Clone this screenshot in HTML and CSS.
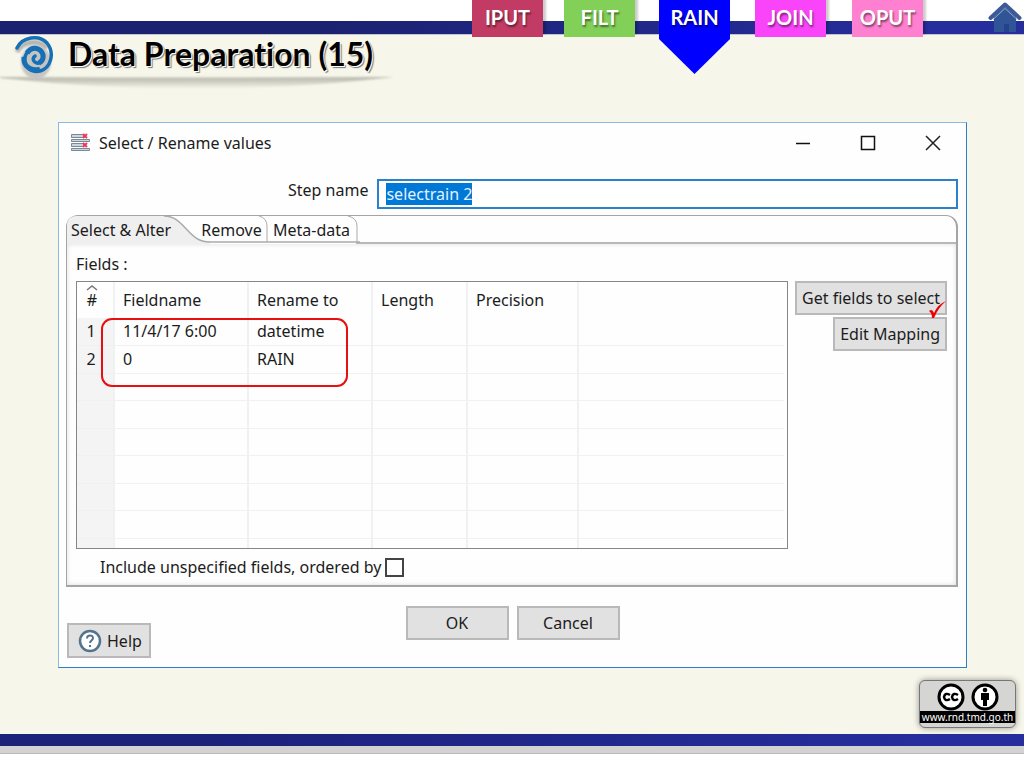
FILE: index.html
```html
<!DOCTYPE html>
<html lang="en">
<head>
<meta charset="utf-8">
<title>Data Preparation (15)</title>
<link rel="stylesheet" href="styles.css">
</head>
<body>
<header class="topbar">
  <nav class="steps">
    <a class="step step-iput" href="#iput">IPUT</a>
    <a class="step step-filt" href="#filt">FILT</a>
    <a class="step step-rain" href="#rain">RAIN</a>
    <a class="step step-join" href="#join">JOIN</a>
    <a class="step step-oput" href="#oput">OPUT</a>
  </nav>
  <a class="home" href="#home" aria-label="Home">
    <svg width="34" height="32" viewBox="0 0 34 32">
      <path d="M6 17 17 7l11 10v15h-7v-8h-5v8H6z" fill="#2f5597"/>
      <path d="M16 24h5v8h-5z" fill="#26428f"/>
      <path d="M2.500 18 17 4.500 31.500 18" fill="none" stroke="#3b5a96" stroke-width="4" stroke-linecap="round" stroke-linejoin="round"/>
      <path d="M5 19.500 17 8.500 29 19.500" fill="none" stroke="#8ea6cc" stroke-width="1"/>
    </svg>
  </a>
</header>

<main class="slide">
  <div class="heading">
    <svg class="swirl" width="48" height="48" viewBox="0 0 48 48" aria-hidden="true">
      <defs><filter id="soft" x="-20%" y="-20%" width="140%" height="140%"><feGaussianBlur stdDeviation="1"/></filter></defs>
      <ellipse cx="24" cy="27" rx="15" ry="17" fill="#c4c4c1" filter="url(#soft)"/>
      <path d="M5 17C10 6 27 4 35 13" fill="none" stroke="#b4b4b2" stroke-width="5" filter="url(#soft)"/>
      <g fill="none" stroke="#176fb5">
        <path d="M5 13C10 2 27-1 35 8c8 10 4 25-7 28-9 2-17-5-15-14 2-8 11-11 16-6 5 6 1 13-4 12-4-1-5-5-2-7" stroke-width="3.500" stroke-linecap="round"/>
        <path d="M12 22c-1 9 7 15 16 12M15 18c4-6 10-6 14-2 4 5 2 10-2 12" stroke-width="5"/>
      </g>
    </svg>
    <h1>Data Preparation (15)</h1>
    <svg class="heading-shade" viewBox="0 0 394 16" preserveAspectRatio="none" aria-hidden="true">
      <defs><linearGradient id="shade" x1="0" y1="0" x2="0" y2="1"><stop offset="0" stop-color="#b4b4aa"/><stop offset="1" stop-color="#f6f6ea"/></linearGradient></defs>
      <path d="M0 3Q200 4 394 3Q200 26 0 4z" fill="url(#shade)" filter="url(#soft)"/>
    </svg>
  </div>

  <section class="dialog" aria-label="Select / Rename values">
    <div class="titlebar">
      <svg width="22" height="20" viewBox="0 0 22 20" aria-hidden="true">
        <g fill="#c8d6e2" stroke="#7b8995">
          <path d="M1.500 1.500h12v3h-12zM1.500 6.500h18v2h-18zM1.500 10.500h12v3h-12zM1.500 15.500h18v2h-18z"/>
        </g>
        <path d="m13 1 4 4m0-4-4 4M13 10l4 4m0-4-4 4" stroke="#f0385c" stroke-width="2"/>
      </svg>
      <h2>Select / Rename values</h2>
      <div class="window-buttons">
        <button type="button" aria-label="Minimize"><svg width="16" height="16" viewBox="0 0 16 16"><path d="M1 8.500h14" stroke="#111" stroke-width="1.500"/></svg></button>
        <button type="button" aria-label="Maximize"><svg width="16" height="16" viewBox="0 0 16 16"><path d="M1.500 1.500h13v13h-13z" fill="none" stroke="#111" stroke-width="1.500"/></svg></button>
        <button type="button" aria-label="Close"><svg width="16" height="16" viewBox="0 0 16 16"><path d="m1 1 14 14M15 1 1 15" stroke="#222" stroke-width="1.500"/></svg></button>
      </div>
    </div>

    <div class="step-name">
      <label for="stepname">Step name</label>
      <input id="stepname" type="text" value="selectrain 2" autofocus>
    </div>

    <div class="tabs">
      <div class="tablist" role="tablist">
        <svg class="tab-shape" width="294" height="29" viewBox="0 0 294 29" aria-hidden="true">
          <path d="M1 29V11Q1 1 11 1H98C119 1 121 27 144 27V29z" fill="#efefef"/>
          <path d="M98 1C119 1 121 27 144 27H294" fill="none" stroke="#aaa" stroke-width="1.500"/>
          <path d="M193 1q8 2 8 10v16M282 1q9 2 9 10v16" fill="none" stroke="#aaa"/>
        </svg>
        <button class="tab tab-alter" type="button" role="tab" aria-selected="true">Select &amp; Alter</button>
        <button class="tab tab-remove" type="button" role="tab" aria-selected="false">Remove</button>
        <button class="tab" type="button" role="tab" aria-selected="false">Meta-data</button>
        <span class="tab-rest"></span>
      </div>

      <div class="panel" role="tabpanel">
        <div class="fields-label">Fields :</div>
        <div class="fields">
          <div class="grid-box">
            <table class="grid">
              <colgroup><col class="c-num"><col class="c-field"><col class="c-rename"><col class="c-length"><col class="c-precision"><col></colgroup>
              <thead><tr><th class="num"><svg width="12" height="6" viewBox="0 0 12 6" aria-hidden="true"><path d="m1 5 5-4 5 4" fill="none" stroke="#777" stroke-width="1.500"/></svg>#</th><th>Fieldname</th><th>Rename to</th><th>Length</th><th>Precision</th><th></th></tr></thead>
              <tbody>
                <tr><td class="num">1</td><td>11/4/17 6:00</td><td>datetime</td><td></td><td></td><td></td></tr>
                <tr><td class="num">2</td><td>0</td><td>RAIN</td><td></td><td></td><td></td></tr>
                <tr><td class="num"></td><td></td><td></td><td></td><td></td><td></td></tr>
                <tr><td class="num"></td><td></td><td></td><td></td><td></td><td></td></tr>
                <tr><td class="num"></td><td></td><td></td><td></td><td></td><td></td></tr>
                <tr><td class="num"></td><td></td><td></td><td></td><td></td><td></td></tr>
                <tr><td class="num"></td><td></td><td></td><td></td><td></td><td></td></tr>
                <tr><td class="num"></td><td></td><td></td><td></td><td></td><td></td></tr>
                <tr class="last"><td class="num"></td><td></td><td></td><td></td><td></td><td></td></tr>
              </tbody>
            </table>
            <span class="mark-box"></span>
          </div>
          <div class="side">
            <button class="btn" type="button">Get fields to select</button>
            <button class="btn" type="button">Edit Mapping</button>
            <svg class="check" width="20" height="20" viewBox="0 0 20 20" aria-hidden="true"><path d="M2 11q3-3 5 2Q11 4 19 1 11 8 7 18H5Q5 13 2 11z" fill="#f00000"/></svg>
          </div>
        </div>
        <div class="include">
          <label for="unspecified">Include unspecified fields, ordered by</label>
          <input id="unspecified" type="checkbox">
        </div>
      </div>
    </div>

    <div class="actions">
      <button class="btn help" type="button">
        <svg width="24" height="24" viewBox="0 0 24 24" aria-hidden="true"><circle cx="12" cy="12" r="10" fill="#fff" stroke="#54738c" stroke-width="2.500"/><path d="M9 9.500c0-4 6-4 6-.5 0 2.500-3 2.500-3 5M12 16v2" fill="none" stroke="#54738c" stroke-width="2"/></svg>
        Help
      </button>
      <div class="confirm">
        <button class="btn" type="button">OK</button>
        <button class="btn" type="button">Cancel</button>
      </div>
    </div>
  </section>
</main>

<footer class="footer">
  <a class="license" href="#license">
    <svg width="62" height="28" viewBox="0 0 62 28" aria-hidden="true">
      <g fill="#fff" stroke="#000" stroke-width="3"><circle cx="14" cy="14" r="12"/><circle cx="48" cy="14" r="12"/></g>
      <path d="M13 12q-5-3-6 2 1 5 6 2M21 12q-5-3-6 2 1 5 6 2" fill="none" stroke="#000" stroke-width="2.500"/>
      <circle cx="48" cy="7" r="2.300"/><path d="M44 10h8v7h-2v6h-4v-6h-2z"/>
    </svg>
    <span>www.rnd.tmd.go.th</span>
  </a>
</footer>
<script src="script.js"></script>
</body>
</html>
```

FILE: styles.css
```css
* { box-sizing: border-box; }

body {
  margin: 0;
  min-height: 100vh;
  display: flex;
  flex-direction: column;
  background: #f6f6ea;
  color: #1c1c1c;
  font: 16px/22px "Noto Sans", "Open Sans", sans-serif;
}

button, input { font: inherit; color: inherit; }
h1, h2 { margin: 0; }

.topbar {
  display: flex;
  justify-content: flex-end;
  height: 35px;
  background: linear-gradient(#fff 21px, transparent 21px 34px, #c4c4d0 34px), linear-gradient(90deg, #1b2270 30%, #262d9c 90%);
}

.steps {
  display: grid;
  grid-template-columns: 92px 95px 96px 97px 71px;
  align-items: start;
  margin-right: 65px;
}

.step {
  width: 71px;
  height: 37px;
  color: #fff;
  font: bold 20px/35px Lato, sans-serif;
  text-align: center;
  text-decoration: none;
  text-shadow: 1px 2px 2px rgba(0, 0, 0, 0.5);
  box-shadow: 3px -3px 2px rgba(0, 0, 0, 0.2);
}

.step-iput { background: #c23b64; }
.step-filt { background: #82d058; }
.step-join { background: #f944f9; }
.step-oput { background: #ff80d0; }
.step-rain {
  height: 74px;
  background: #00f;
  clip-path: polygon(0 0, 100% 0, 100% 39px, 50% 100%, 0 39px);
}

.home { width: 36px; height: 34px; }

.slide {
  flex: 1;
  padding: 0 57px 66px 58px;
}

.heading {
  position: relative;
  display: flex;
  gap: 8px;
  height: 87px;
  margin-left: -46px;
}

.heading h1 {
  color: #000;
  font: bold 32px/38px Lato, sans-serif;
  font-variant-ligatures: none;
  text-shadow: 1px 1px 0 #fff, 2px 2px 1px #777;
}

.heading-shade {
  position: absolute;
  top: 39px;
  left: -12px;
  width: 394px;
  height: 16px;
  z-index: -1;
}

.dialog {
  display: flex;
  flex-direction: column;
  padding: 0 8px 9px 7px;
  background: #fefefe;
  border: 1px solid #2b7fc9;
  border-top-color: #8abbe0;
  border-left-color: #8abbe0;
}

.titlebar {
  display: flex;
  align-items: center;
  gap: 7px;
  height: 40px;
  padding: 0 11px 0 4px;
}

.titlebar h2 { flex: 1; font-size: 16px; font-weight: normal; }
.window-buttons { display: flex; gap: 49px; padding-right: 6px; }
.window-buttons button {
  display: flex;
  padding: 0;
  border: 0;
  background: none;
}

.step-name {
  display: flex;
  gap: 9px;
  height: 30px;
  margin: 16px 0 6px;
  padding-left: 222px;
}

.step-name label { white-space: nowrap; }
.step-name input {
  flex: 1;
  min-width: 0;
  padding: 0 7px;
  border: 2px solid #2b82cb;
  background: #fff;
  outline: 0;
  caret-color: #e89048;
}
.step-name input::selection { background: #0078d7; color: #e4f2ff; }

.tabs {
  border: 1px solid #a5a5a5;
  border-right-width: 2px;
  border-bottom-width: 2px;
  border-radius: 12px 12px 0 0;
}

.tablist {
  position: relative;
  display: flex;
  height: 28px;
}

.tab-shape { position: absolute; left: -1px; top: -1px; }
.tab {
  position: relative;
  padding: 0 6px 0 4px;
  border: 0;
  background: none;
}
.tab-alter { width: 129px; text-align: left; white-space: nowrap; }
.tab-remove { width: 73px; }
.tab-rest { flex: 1; border-bottom: 2px solid #b8b8b8; }

.panel {
  padding: 9px 9px 7px;
  box-shadow: inset 0 0 5px #ddd;
}

.fields-label { height: 28px; }
.fields { display: flex; gap: 7px; }

.grid-box {
  position: relative;
  flex: 1;
  border: 1px solid #85858a;
  padding-right: 3px;
}

.grid {
  width: 100%;
  border-collapse: collapse;
  table-layout: fixed;
}
.c-num { width: 37px; }
.c-field { width: 134px; }
.c-rename { width: 124px; }
.c-length { width: 95px; }
.c-precision { width: 111px; }

.grid th, .grid td {
  height: 27px;
  padding: 0 8px;
  border-right: 2px solid #f0f1f3;
  border-bottom: 1px solid #f0f1f3;
  font-weight: normal;
  line-height: 20px;
  text-align: left;
}
.grid th { height: 36px; border-bottom: 0; }
.grid tr:nth-child(even) td { height: 28px; }
.grid .last td { height: 10px; border-bottom: 0; }
.grid th:last-child, .grid td:last-child { border-right: 0; }
.grid .num { padding: 0 2px 0 0; text-align: center; }
.grid td.num { padding-right: 8px; background: #f4f4f5; border-bottom-color: #f0f0f1; }
.grid th.num { padding: 0 6px 6px 0; line-height: 18px; }
.grid th.num svg { display: block; margin: 0 auto; }

.mark-box {
  position: absolute;
  left: 24px;
  top: 36px;
  width: 247px;
  height: 69px;
  border: 2px solid #e8100e;
  border-radius: 11px;
}

.side {
  position: relative;
  display: flex;
  flex-direction: column;
  align-items: flex-end;
  gap: 2px;
}

.btn {
  height: 34px;
  padding: 0 5px;
  border: 2px solid #b9b9b9;
  background: #e1e1e1;
  white-space: nowrap;
}

.check { position: absolute; right: 0; top: 19px; }

.include {
  display: flex;
  align-items: center;
  gap: 4px;
  padding: 7px 0 0 24px;
}
.include input {
  appearance: none;
  width: 19px;
  height: 19px;
  margin: 0;
  border: 2px solid #444;
  background: #fff;
}

.actions {
  display: grid;
  grid-template-columns: 1fr auto 1fr;
  padding: 19px 0 0 1px;
}
.help {
  display: flex;
  align-items: center;
  justify-self: start;
  gap: 5px;
  height: 35px;
  margin-top: 17px;
  padding: 0 7px 0 9px;
}
.confirm { display: flex; gap: 8px; }
.confirm .btn { width: 103px; }

.footer {
  position: relative;
  height: 34px;
  background: linear-gradient(transparent 12px, #d2d2d2 12px 19px, #b4b9b9 19px 20px, #fff 20px), linear-gradient(90deg, #1b227a 20%, #262d9c 90%);
}

.license {
  position: absolute;
  right: 8px;
  bottom: 40px;
  display: flex;
  flex-direction: column;
  align-items: center;
  width: 97px;
  padding: 2px 0 4px;
  background: #d5d5d3;
  border: 1px solid #777;
  border-radius: 6px;
  box-shadow: 0 0 6px rgba(0, 0, 0, 0.4);
  text-decoration: none;
}
.license svg { display: block; }
.license span {
  width: 100%;
  background: #000;
  color: #fff;
  font: 10px/12px "Noto Sans", sans-serif;
  text-align: center;
  white-space: nowrap;
}
```

FILE: script.js
```js
const stepName = document.getElementById("stepname");
stepName.focus();
stepName.select();
```
